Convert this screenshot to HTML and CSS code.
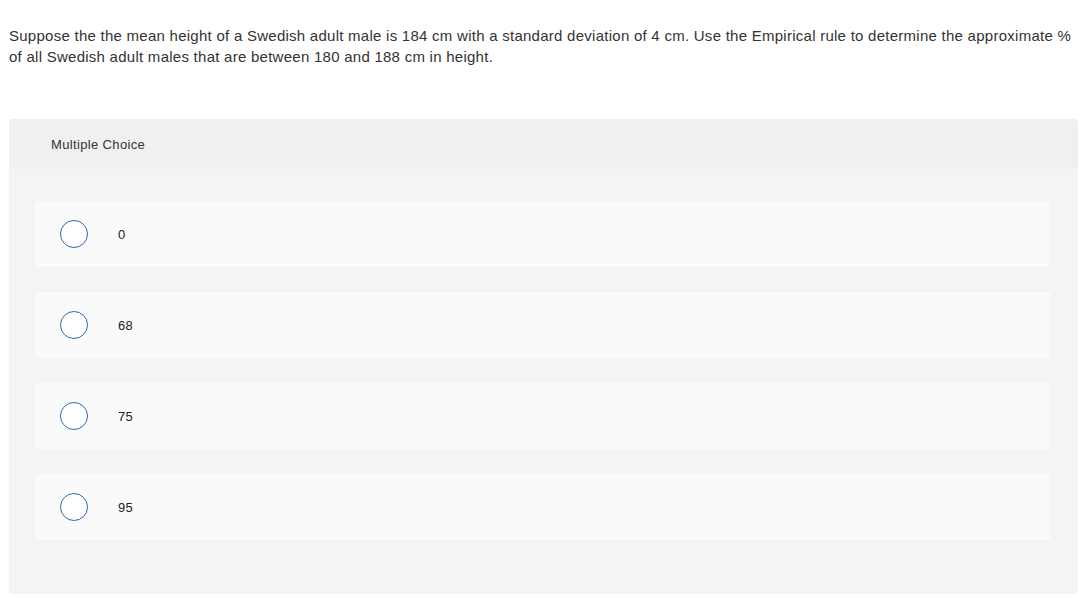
FILE: index.html
```html
<!DOCTYPE html>
<html>
<head>
<meta charset="utf-8">
<link rel="stylesheet" href="styles.css">
</head>
<body>
<div class="question">Suppose the the mean height of a Swedish adult male is 184 cm with a standard deviation of 4 cm. Use the Empirical rule to determine the approximate % of all Swedish adult males that are between 180 and 188 cm in height.</div>
<div class="panel">
  <div class="panel-head">Multiple Choice</div>
  <div class="choices">
    <div class="choice"><span class="radio"></span><span class="label">0</span></div>
    <div class="choice"><span class="radio"></span><span class="label">68</span></div>
    <div class="choice"><span class="radio"></span><span class="label">75</span></div>
    <div class="choice"><span class="radio"></span><span class="label">95</span></div>
  </div>
</div>
</body>
</html>
```

FILE: styles.css
```css
body {
  margin: 0;
  padding: 25px 14px 0 9px;
  font-family: "Liberation Sans", Arial, sans-serif;
  color: #333;
  background: #fff;
}
.question {
  font-size: 15px;
  line-height: 21px;
  letter-spacing: 0.26px;
  width: 1075px;
}
.panel {
  margin-top: 52px;
  width: 1069px;
  background: #f4f4f4;
  border-radius: 4px;
  padding-bottom: 54px;
}
.panel-head {
  height: 50px;
  background: #f0f0f0;
  border-radius: 4px 4px 0 0;
  padding-left: 42px;
  display: flex;
  align-items: center;
  font-size: 13px;
  letter-spacing: 0.35px;
  color: #333;
}
.choices {
  padding: 32px 28px 0 26px;
  display: flex;
  flex-direction: column;
  gap: 25px;
}
.choice {
  height: 66px;
  background: #fafafa;
  border-radius: 3px;
  display: flex;
  align-items: center;
  padding-left: 25px;
}
.radio {
  width: 26px;
  height: 26px;
  border: 1px solid #2a6ab0;
  border-radius: 50%;
  background: #fff;
  flex: none;
}
.label {
  margin-left: 30px;
  font-size: 13px;
  letter-spacing: 0.3px;
  color: #222;
}
```
